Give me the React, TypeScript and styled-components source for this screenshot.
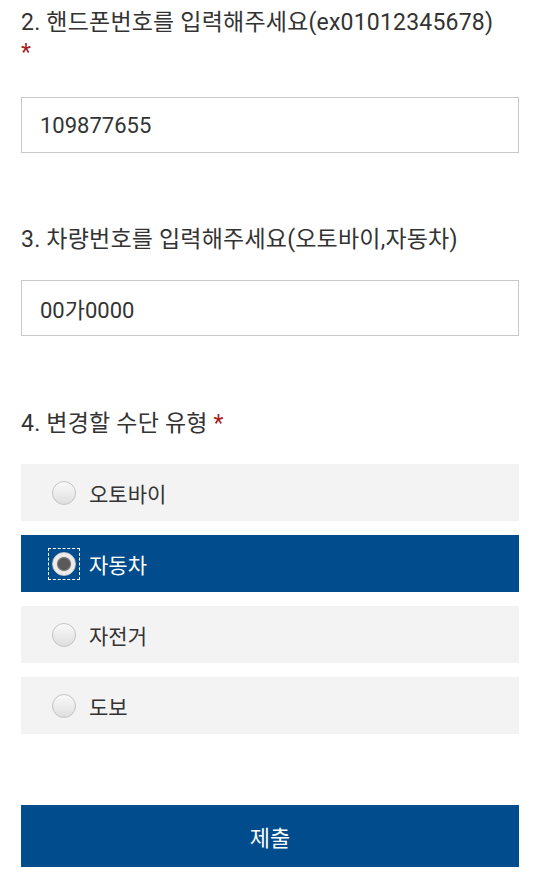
import React, { useState } from "react";
import styled, { createGlobalStyle } from "styled-components";

const Global = createGlobalStyle`
  html, body { margin: 0; padding: 0; background: #fff; }
  body { font-family: Roboto, "Noto Sans CJK KR", sans-serif; color: #333; }
  * { box-sizing: border-box; }
`;

const Page = styled.form`
  padding: 8px 21px 0;
  display: flex;
  flex-direction: column;
`;

const Question = styled.div<{ $gapAfter: number }>`
  display: flex;
  flex-direction: column;
  margin-bottom: ${(p) => p.$gapAfter}px;
`;

const Label = styled.div<{ $gap: number }>`
  font-size: 23px;
  line-height: 30px;
  letter-spacing: 0.2px;
  color: #333;
  margin-bottom: ${(p) => p.$gap}px;
`;

const Req = styled.span`
  color: #a8201a;
`;

const TextInput = styled.input`
  width: 100%;
  height: 56px;
  border: 1px solid #c8c8c8;
  padding: 0 18px;
  font-family: Roboto, "Noto Sans CJK KR", sans-serif;
  font-size: 22px;
  color: #333;
  outline: none;
  background: #fff;
`;

const Options = styled.div`
  display: flex;
  flex-direction: column;
  gap: 14px;
`;

const Option = styled.label<{ $selected: boolean }>`
  display: flex;
  align-items: center;
  height: 57px;
  padding-left: 28px;
  background: ${(p) => (p.$selected ? "#004c8c" : "#f3f3f3")};
  color: ${(p) => (p.$selected ? "#fff" : "#333")};
  font-size: 21px;
  cursor: pointer;
`;

const RadioWrap = styled.span<{ $focus: boolean }>`
  width: 30px;
  height: 30px;
  display: flex;
  align-items: center;
  justify-content: center;
  outline: ${(p) => (p.$focus ? "1px dashed #fff" : "none")};
  margin-right: 10px;
`;

const RadioDot = styled.span<{ $checked: boolean }>`
  width: 24px;
  height: 24px;
  border-radius: 50%;
  border: 1px solid #c4c4c4;
  background: ${(p) =>
    p.$checked
      ? "radial-gradient(circle, #5a5a5a 0 5.5px, #7a7a7a 6.5px, #e8e8e8 7.5px, #fafafa 100%)"
      : "linear-gradient(#fafafa, #dedede)"};
  display: block;
`;

const HiddenRadio = styled.input`
  position: absolute;
  opacity: 0;
  width: 0;
  height: 0;
`;

const Submit = styled.button`
  margin-top: 71px;
  height: 62px;
  width: 100%;
  border: none;
  background: #004c8c;
  color: #fff;
  font-family: Roboto, "Noto Sans CJK KR", sans-serif;
  font-size: 22px;
`;

const choices = ["오토바이", "자동차", "자전거", "도보"];

export default function App() {
  const [sel, setSel] = useState("자동차");
  return (
    <>
      <Global />
      <Page onSubmit={(e) => e.preventDefault()}>
        <Question $gapAfter={72}>
          <Label $gap={29}>
            2. 핸드폰번호를 입력해주세요(ex01012345678)
            <br />
            <Req>*</Req>
          </Label>
          <TextInput defaultValue="109877655" />
        </Question>
        <Question $gapAfter={73}>
          <Label $gap={25}>3. 차량번호를 입력해주세요(오토바이,자동차)</Label>
          <TextInput defaultValue="00가0000" />
        </Question>
        <Question $gapAfter={0}>
          <Label $gap={25}>
            4. 변경할 수단 유형 <Req>*</Req>
          </Label>
          <Options>
            {choices.map((c) => (
              <Option key={c} $selected={sel === c}>
                <HiddenRadio
                  type="radio"
                  name="mode"
                  checked={sel === c}
                  onChange={() => setSel(c)}
                />
                <RadioWrap $focus={sel === c}>
                  <RadioDot $checked={sel === c} />
                </RadioWrap>
                {c}
              </Option>
            ))}
          </Options>
        </Question>
        <Submit type="submit">제출</Submit>
      </Page>
    </>
  );
}
